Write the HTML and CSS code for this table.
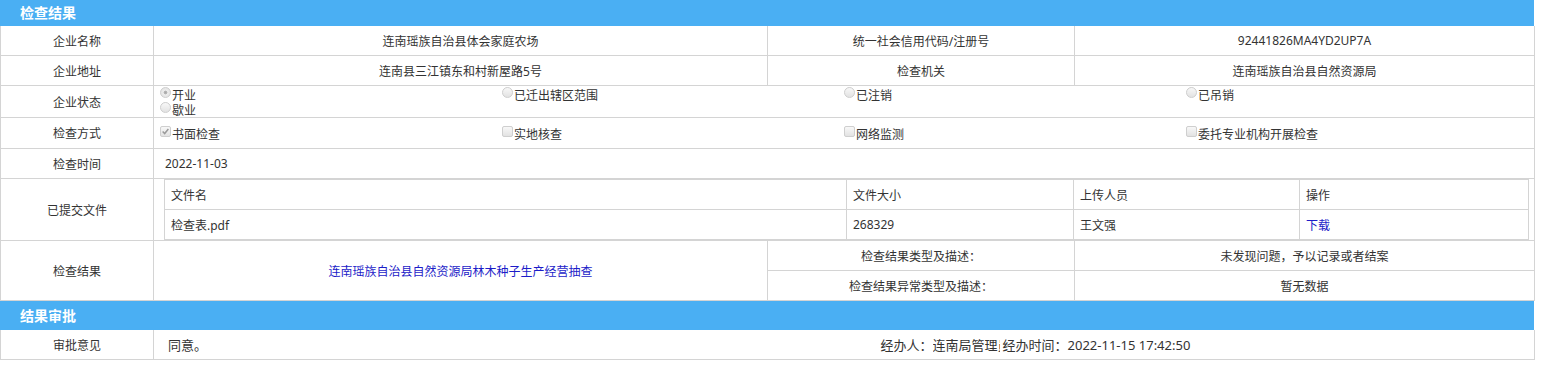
FILE: index.html
```html
<!DOCTYPE html>
<html>
<head>
  <meta charset="utf-8">
  <title>检查结果</title>
  <link rel="stylesheet" href="styles.css">
</head>
<body>
  <div class="panel">
    <div class="panel-title first">检查结果</div>
    <table class="info">
      <colgroup>
        <col class="col-label">
        <col class="col-value">
        <col class="col-label2">
        <col class="col-value2">
      </colgroup>
      <tr>
        <th>企业名称</th>
        <td>连南瑶族自治县体会家庭农场</td>
        <th>统一社会信用代码/注册号</th>
        <td>92441826MA4YD2UP7A</td>
      </tr>
      <tr>
        <th>企业地址</th>
        <td>连南县三江镇东和村新屋路5号</td>
        <th>检查机关</th>
        <td>连南瑶族自治县自然资源局</td>
      </tr>
      <tr class="row-opts">
        <th>企业状态</th>
        <td colspan="3" class="opts">
          <label class="opt"><span class="radio checked"></span>开业</label><label class="opt"><span class="radio"></span>已迁出辖区范围</label><label class="opt"><span class="radio"></span>已注销</label><label class="opt"><span class="radio"></span>已吊销</label><label class="opt"><span class="radio"></span>歇业</label>
        </td>
      </tr>
      <tr>
        <th>检查方式</th>
        <td colspan="3" class="opts single">
          <label class="opt"><span class="check checked"><svg viewBox="0 0 11 11"><path d="M2 5.5 L4.5 8 L9 2.5" /></svg></span>书面检查</label><label class="opt"><span class="check"></span>实地核查</label><label class="opt"><span class="check"></span>网络监测</label><label class="opt"><span class="check"></span>委托专业机构开展检查</label>
        </td>
      </tr>
      <tr>
        <th>检查时间</th>
        <td colspan="3" class="text-left">2022-11-03</td>
      </tr>
      <tr class="row-files">
        <th>已提交文件</th>
        <td colspan="3" class="files">
          <table class="file-list">
            <colgroup>
              <col class="fcol-name">
              <col class="fcol-size">
              <col class="fcol-user">
              <col class="fcol-op">
            </colgroup>
            <tr>
              <td>文件名</td>
              <td>文件大小</td>
              <td>上传人员</td>
              <td>操作</td>
            </tr>
            <tr>
              <td>检查表.pdf</td>
              <td>268329</td>
              <td>王文强</td>
              <td><a href="#">下载</a></td>
            </tr>
          </table>
        </td>
      </tr>
      <tr>
        <th rowspan="2">检查结果</th>
        <td rowspan="2"><a href="#">连南瑶族自治县自然资源局林木种子生产经营抽查</a></td>
        <th>检查结果类型及描述：</th>
        <td>未发现问题，予以记录或者结案</td>
      </tr>
      <tr>
        <th>检查结果异常类型及描述：</th>
        <td>暂无数据</td>
      </tr>
    </table>

    <div class="panel-title">结果审批</div>
    <table class="info">
      <colgroup>
        <col class="col-label">
        <col class="col-value">
        <col class="col-label2">
        <col class="col-value2">
      </colgroup>
      <tr>
        <th>审批意见</th>
        <td class="opinion">同意。</td>
        <td colspan="2" class="handler">经办人：<span class="handler-name">连南局管理员</span><span class="handler-time">经办时间：2022-11-15 17:42:50</span></td>
      </tr>
    </table>
  </div>
</body>
</html>
```

FILE: styles.css
```css
body {
  margin: 0;
  background: #fff;
  font-family: "Noto Sans", "Noto Sans CJK SC", sans-serif;
  font-size: 12px;
  color: #333;
}

.panel { width: 1534px; }

.panel-title {
  height: 29px;
  line-height: 29px;
  padding-left: 20px;
  background: #4aaff3;
  color: #fff;
  font-size: 14px;
  font-weight: bold;
}
.panel-title.first { height: 26px; line-height: 26px; }

table.info {
  width: 1534px;
  table-layout: fixed;
  border-collapse: collapse;
}
.info .col-label { width: 153px; }
.info .col-value { width: 614px; }
.info .col-label2 { width: 307px; }
.info .col-value2 { width: 460px; }

.info th, .info td {
  height: 29px;
  padding: 0;
  border: 1px solid #d4d4d4;
  text-align: center;
  font-weight: normal;
  vertical-align: middle;
  white-space: nowrap;
}
.info tr:first-child th, .info tr:first-child td { border-top: 0; }

a { color: #1c1cc8; text-decoration: none; }

/* radio / checkbox groups, four to a line */
.info td.opts {
  text-align: left;
  padding: 1px 6px 0;
  font-size: 0;
  white-space: normal;
}
.row-opts th, .row-opts td { height: 30px; }
.opt {
  display: inline-block;
  width: 25%;
  height: 15px;
  line-height: 15px;
  vertical-align: top;
  font-size: 12px;
  white-space: nowrap;
}
.radio, .check {
  display: inline-block;
  width: 9px;
  height: 9px;
  margin-right: 1px;
  border: 1px solid #cfcfcf;
  background: linear-gradient(#f8f8f8, #e2e2e2);
  vertical-align: 2px;
  box-sizing: content-box;
}
.radio { border-radius: 50%; }
.radio.checked {
  background: radial-gradient(circle, #a8a8a8 0, #b8b8b8 25%, #ececec 35%, #dedede 100%);
}
.check { border-radius: 2px; position: relative; }
.check svg {
  position: absolute;
  left: 0;
  top: 0;
  width: 9px;
  height: 9px;
}
.check svg path {
  fill: none;
  stroke: #9a9a9a;
  stroke-width: 1.8;
}

.info td.text-left { text-align: left; padding-left: 11px; }

/* nested list of uploaded files */
.info td.files { padding: 0 6px 0 10px; }
.row-files th { height: 60px; }
table.file-list {
  width: 1364px;
  table-layout: fixed;
  border-collapse: collapse;
  border: 1px solid #d4d4d4;
}
.file-list .fcol-name { width: 682px; }
.file-list .fcol-size { width: 227px; }
.file-list .fcol-user { width: 226px; }
.file-list .fcol-op { width: 229px; }
.file-list td {
  height: 29px;
  padding: 0 0 0 6px;
  border: 1px solid #d4d4d4;
  text-align: left;
}

/* approval row: opinion and handler share one visual cell */
.info td.opinion {
  text-align: left;
  padding-left: 14px;
  font-size: 13px;
  border-right-style: hidden;
}
.info td.handler {
  text-align: left;
  padding-left: 113px;
  font-size: 13px;
}
.handler-name {
  display: inline-block;
  width: 67px;
  overflow: hidden;
  white-space: nowrap;
  vertical-align: bottom;
}
.handler-time { margin-left: 3px; }
```
